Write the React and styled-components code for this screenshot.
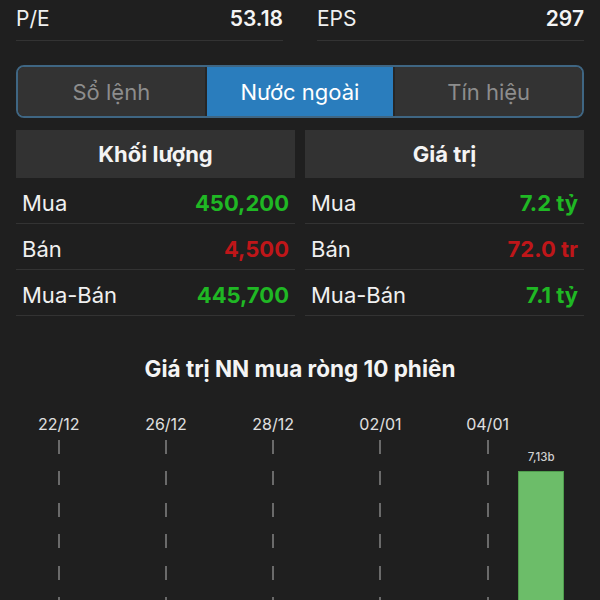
import React from "react";
import styled, { createGlobalStyle } from "styled-components";

const Global = createGlobalStyle`
  html, body { margin: 0; padding: 0; background: #1f1f1f; overflow: hidden; }
  body { font-family: Inter, "Noto Sans", "DejaVu Sans", sans-serif; color: #f2f2f2; }
  * { box-sizing: border-box; }
`;

const Page = styled.div`
  width: 600px;
  height: 600px;
  overflow: hidden;
  background: #1f1f1f;
`;

const StatRow = styled.div`
  display: grid;
  grid-template-columns: 1fr 1fr;
  column-gap: 34px;
  padding: 0 16px;
`;

const Stat = styled.div`
  display: flex;
  justify-content: space-between;
  align-items: center;
  height: 41px;
  padding-bottom: 4px;
  border-bottom: 1.5px solid #333;
`;

const StatLabel = styled.span`
  font-size: 21px;
  font-weight: 400;
  color: #f0f0f0;
`;

const StatValue = styled.span`
  font-size: 21px;
  font-weight: 600;
  color: #f4f4f4;
`;

const Tabs = styled.div`
  margin: 24px 16px 0;
  height: 53px;
  border: 2px solid #3f6683;
  border-radius: 8px;
  display: grid;
  grid-template-columns: 1fr 1fr 1fr;
  gap: 2px;
  background: #262626;
  overflow: hidden;
`;

const Tab = styled.div`
  display: flex;
  align-items: center;
  justify-content: center;
  font-size: 22px;
  background: ${(p) => (p.$active ? "#2a7dbd" : "#333333")};
  color: ${(p) => (p.$active ? "#ffffff" : "#8d8d8d")};
`;

const Tables = styled.div`
  margin-top: 12px;
  display: grid;
  grid-template-columns: 1fr 1fr;
  column-gap: 10px;
  padding: 0 16px;
`;

const Table = styled.div`
  display: flex;
  flex-direction: column;
`;

const Head = styled.div`
  height: 48px;
  background: #323232;
  display: flex;
  align-items: center;
  justify-content: center;
  font-size: 22px;
  font-weight: 700;
  color: #f4f4f4;
`;

const Row = styled.div`
  height: 46px;
  display: flex;
  align-items: center;
  justify-content: space-between;
  padding: 5px 6px 0;
  border-bottom: 1.5px solid #333;
`;

const RowLabel = styled.span`
  font-size: 22px;
  color: #f0f0f0;
`;

const RowValue = styled.span`
  font-size: 22px;
  font-weight: 700;
  color: ${(p) => (p.$down ? "#bf1619" : "#1fb824")};
`;

const ChartTitle = styled.div`
  margin-top: 41px;
  text-align: center;
  font-size: 22.5px;
  font-weight: 700;
  line-height: 24px;
  color: #f4f4f4;
`;

const Chart = styled.div`
  margin-top: 33px;
  padding: 0 32px;
  display: grid;
  grid-template-columns: repeat(10, 1fr);
  height: 300px;
`;

const Col = styled.div`
  display: flex;
  flex-direction: column;
  align-items: center;
`;

const DateLabel = styled.div`
  height: 20px;
  line-height: 20px;
  font-size: 16px;
  color: #e0e0e0;
  white-space: nowrap;
`;

const Dash = styled.div`
  margin-top: 6px;
  width: 2px;
  flex: 1;
  background: repeating-linear-gradient(
    to bottom,
    #6a6a6a 0 14px,
    transparent 14px 31.5px
  );
`;

const BarLabel = styled.div`
  margin-top: 16px;
  height: 14px;
  line-height: 14px;
  font-size: 11.5px;
  font-weight: 500;
  color: #cfcfcf;
`;

const Bar = styled.div`
  margin-top: 7px;
  width: 46px;
  flex: 1;
  background: #6cbd69;
  border: 1px solid #4f9d4d;
`;

const volume = [
  ["Mua", "450,200", false],
  ["Bán", "4,500", true],
  ["Mua-Bán", "445,700", false],
];
const value = [
  ["Mua", "7.2 tỷ", false],
  ["Bán", "72.0 tr", true],
  ["Mua-Bán", "7.1 tỷ", false],
];

const dates = ["22/12", "", "26/12", "", "28/12", "", "02/01", "", "04/01", ""];

export default function App() {
  return (
    <Page>
      <Global />
      <StatRow>
        <Stat>
          <StatLabel>P/E</StatLabel>
          <StatValue>53.18</StatValue>
        </Stat>
        <Stat>
          <StatLabel>EPS</StatLabel>
          <StatValue>297</StatValue>
        </Stat>
      </StatRow>
      <Tabs>
        <Tab>Sổ lệnh</Tab>
        <Tab $active>Nước ngoài</Tab>
        <Tab>Tín hiệu</Tab>
      </Tabs>
      <Tables>
        <Table>
          <Head>Khối lượng</Head>
          {volume.map(([l, v, d]) => (
            <Row key={l}>
              <RowLabel>{l}</RowLabel>
              <RowValue $down={d}>{v}</RowValue>
            </Row>
          ))}
        </Table>
        <Table>
          <Head>Giá trị</Head>
          {value.map(([l, v, d]) => (
            <Row key={l}>
              <RowLabel>{l}</RowLabel>
              <RowValue $down={d}>{v}</RowValue>
            </Row>
          ))}
        </Table>
      </Tables>
      <ChartTitle>Giá trị NN mua ròng 10 phiên</ChartTitle>
      <Chart>
        {dates.map((d, i) => (
          <Col key={i}>
            <DateLabel>{d}</DateLabel>
            {d && <Dash />}
            {i === 9 && (
              <>
                <BarLabel>7,13b</BarLabel>
                <Bar />
              </>
            )}
          </Col>
        ))}
      </Chart>
    </Page>
  );
}
